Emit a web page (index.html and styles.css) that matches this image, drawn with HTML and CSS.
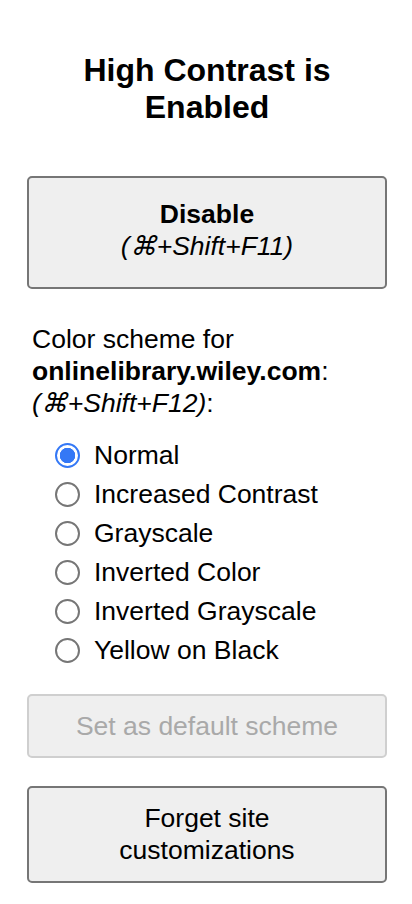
FILE: index.html
```html
<!DOCTYPE html>
<html lang="en">
<head>
<meta charset="utf-8">
<title>High Contrast</title>
<link rel="stylesheet" href="styles.css">
</head>
<body>
<main class="popup">
  <h1 class="title">High Contrast is Enabled</h1>
  <button class="btn btn-toggle" type="button">
    <span class="btn-strong">Disable</span>
    <span class="btn-shortcut">(⌘+Shift+F11)</span>
  </button>
  <p class="scheme-label">Color scheme for <b>onlinelibrary.wiley.com</b>: <i>(⌘+Shift+F12)</i>:</p>
  <div class="scheme-list">
    <label class="scheme-row"><input class="radio" type="radio" name="scheme" checked><span>Normal</span></label>
    <label class="scheme-row"><input class="radio" type="radio" name="scheme"><span>Increased Contrast</span></label>
    <label class="scheme-row"><input class="radio" type="radio" name="scheme"><span>Grayscale</span></label>
    <label class="scheme-row"><input class="radio" type="radio" name="scheme"><span>Inverted Color</span></label>
    <label class="scheme-row"><input class="radio" type="radio" name="scheme"><span>Inverted Grayscale</span></label>
    <label class="scheme-row"><input class="radio" type="radio" name="scheme"><span>Yellow on Black</span></label>
  </div>
  <button class="btn btn-default" type="button" disabled>Set as default scheme</button>
  <button class="btn btn-forget" type="button">Forget site<br>customizations</button>
</main>
</body>
</html>
```

FILE: styles.css
```css
html, body {
  margin: 0;
  padding: 0;
  background: #ffffff;
}

body {
  font-family: "Liberation Sans", Arial, sans-serif;
  color: #000000;
  font-size: 26.5px;
  line-height: 32px;
}

.popup {
  width: 360px;
  padding: 0 25px 0 27px;
  display: flex;
  flex-direction: column;
}

.title {
  margin: 52px 0 0;
  font-size: 32px;
  line-height: 37px;
  font-weight: bold;
  text-align: center;
}

.btn {
  box-sizing: border-box;
  width: 360px;
  margin: 0;
  border: 2px solid #767676;
  border-radius: 5px;
  background: #efefef;
  font-family: "Liberation Sans", Arial, sans-serif;
  font-size: 26.5px;
  line-height: 32px;
  color: #000000;
  text-align: center;
  display: flex;
  flex-direction: column;
  align-items: center;
}

.btn-toggle {
  margin-top: 50px;
  padding: 20px 0 25px;
}

.btn-strong {
  font-weight: bold;
}

.btn-shortcut {
  font-style: italic;
}

.scheme-label {
  margin: 34px 0 0 5px;
}

.scheme-list {
  margin: 20px 0 0 28px;
  display: flex;
  flex-direction: column;
  gap: 7px;
}

.scheme-row {
  display: flex;
  align-items: center;
  gap: 14px;
  height: 32px;
}

.radio {
  appearance: none;
  -webkit-appearance: none;
  box-sizing: border-box;
  width: 25px;
  height: 25px;
  margin: 0;
  border: 2px solid #767676;
  border-radius: 50%;
  background: #ffffff;
  flex: none;
}

.radio:checked {
  border-color: #3478f6;
  background: radial-gradient(circle, #3478f6 0 7.5px, #ffffff 8px);
}

.btn-default {
  margin-top: 28px;
  padding: 14px 0;
  border-color: #cfcfcf;
  color: #a9a9a9;
  background: #efefef;
}

.btn-forget {
  margin-top: 28px;
  padding: 14px 0 15px;
}
```
